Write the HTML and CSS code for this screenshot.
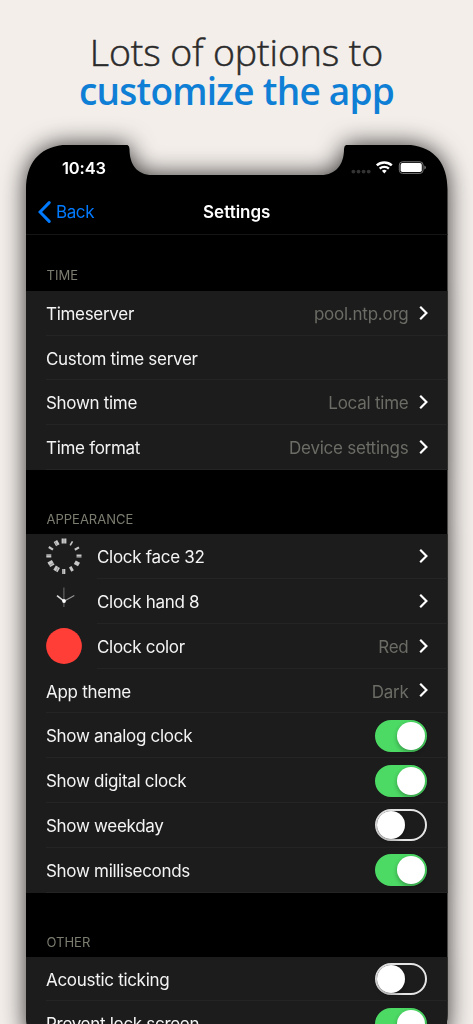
FILE: index.html
```html
<!DOCTYPE html>
<html lang="en">
<head>
    <meta charset="UTF-8">
    <meta name="viewport" content="width=device-width, initial-scale=1.0">
    <title>Settings</title>
    <link rel="stylesheet" href="styles.css">
</head>
<body>
    <svg class="symbols">
        <symbol id="chevron" viewBox="0 0 9 14">
            <path d="M1.2 .8 L7.4 7 L1.2 13.2" fill="none" stroke="#fff" stroke-width="2.2"/>
        </symbol>
    </svg>
    <h1 class="headline">
        <span class="line-light">Lots of options to</span>
        <span class="line-bold">customize the app</span>
    </h1>
    <div class="phone-shadow">
        <div class="phone">
            <div class="status-bar">
                <span class="clock">10:43</span>
                <svg class="status-icons" width="76" height="16" viewBox="0 0 76 16">
                    <g fill="#333">
                        <circle cx="2.4" cy="11.6" r="1.9"/>
                        <circle cx="7.5" cy="11.6" r="1.9"/>
                        <circle cx="12.6" cy="11.6" r="1.9"/>
                        <circle cx="17.7" cy="11.6" r="1.9"/>
                    </g>
                    <g fill="none" stroke="#fff" stroke-width="2.4">
                        <path d="M25.8 5.4 a11 11 0 0 1 15 0"/>
                        <path d="M28.7 8.7 a6.8 6.8 0 0 1 9.2 0"/>
                    </g>
                    <path d="M30.9 10.8 a3.7 3.7 0 0 1 4.8 0 L33.3 13.4 Z" fill="#fff"/>
                    <rect x="48.3" y="1.8" width="23.8" height="11.6" rx="3.2" fill="none" stroke="#777" stroke-width="1"/>
                    <rect x="49.6" y="3.1" width="21.2" height="9" rx="1.8" fill="#fff"/>
                    <path d="M73.3 5.6 q1.6 .5 1.6 2 t-1.6 2 Z" fill="#777"/>
                </svg>
            </div>
            <div class="nav-bar">
                <a class="back">
                    <svg width="13" height="22" viewBox="0 0 13 22"><path d="M11.2 1.6 L2 11 L11.2 20.4" fill="none" stroke="#007aff" stroke-width="3" stroke-linecap="round"/></svg>
                    <span>Back</span>
                </a>
                <span class="title">Settings</span>
            </div>

            <h2 class="section-title">TIME</h2>
            <div class="list">
                <div class="row"><div class="cell"><span class="label">Timeserver</span><span class="value">pool.ntp.org</span><svg class="chevron"><use href="#chevron"/></svg></div></div>
                <div class="row"><div class="cell"><span class="label">Custom time server</span></div></div>
                <div class="row"><div class="cell"><span class="label">Shown time</span><span class="value">Local time</span><svg class="chevron"><use href="#chevron"/></svg></div></div>
                <div class="row"><div class="cell"><span class="label">Time format</span><span class="value">Device settings</span><svg class="chevron"><use href="#chevron"/></svg></div></div>
            </div>

            <h2 class="section-title">APPEARANCE</h2>
            <div class="list">
                <div class="row">
                    <svg class="thumb" viewBox="0 0 36 36">
                        <g stroke="#c8c8c8">
                            <path d="M18 .5 V5.5" stroke-width="4.8"/>
                            <path d="M26.5 3.3 L24.2 7.3" stroke-width="1.6"/>
                            <path d="M33 9.4 L28.8 11.8" stroke-width="2.2"/>
                            <path d="M30.5 18 H35.5" stroke-width="3.2"/>
                            <path d="M28.8 24.2 L33 26.6" stroke-width="4"/>
                            <path d="M24.2 28.8 L26.6 33" stroke-width="2.8"/>
                            <path d="M17.7 31 V36" stroke-width="3.2"/>
                            <path d="M11.9 28.8 L9.4 33" stroke-width="4.8"/>
                            <path d="M7.2 24.2 L2.8 26.8" stroke-width="5.4"/>
                            <path d="M.3 17.8 H5.3" stroke-width="3.2"/>
                            <path d="M2.8 9 L7 11.6" stroke-width="2.2"/>
                            <path d="M9.4 3 L11.8 7.2" stroke-width="4"/>
                        </g>
                        <g stroke="#1c1c1c" stroke-width=".3">
                            <path d="M18 0 V6 M30 18.6 H36 M17.2 30 V37 M0 17.2 H6 M9 3.4 L11.5 8 M8 24.8 L2.5 28 M12.6 28.4 L10 33.4"/>
                        </g>
                    </svg>
                    <div class="cell"><span class="label">Clock face 32</span><svg class="chevron"><use href="#chevron"/></svg></div>
                </div>
                <div class="row">
                    <svg class="thumb" viewBox="0 0 36 36">
                        <path d="M17.9 4.5 V24" stroke="#777" stroke-width=".9"/>
                        <path d="M18 18.2 L28.3 12.5" stroke="#999" stroke-width="1.1"/>
                        <path d="M18 18.2 L11 12.7" stroke="#ddd" stroke-width="1.5"/>
                        <circle cx="18" cy="18" r="1.9" fill="#fff"/>
                    </svg>
                    <div class="cell"><span class="label">Clock hand 8</span><svg class="chevron"><use href="#chevron"/></svg></div>
                </div>
                <div class="row">
                    <svg class="thumb" viewBox="0 0 36 36"><circle cx="18" cy="18" r="17.9" fill="#ff3e38"/></svg>
                    <div class="cell"><span class="label">Clock color</span><span class="value">Red</span><svg class="chevron"><use href="#chevron"/></svg></div>
                </div>
                <div class="row"><div class="cell"><span class="label">App theme</span><span class="value">Dark</span><svg class="chevron"><use href="#chevron"/></svg></div></div>
                <div class="row"><div class="cell"><span class="label">Show analog clock</span><span class="switch on"></span></div></div>
                <div class="row"><div class="cell"><span class="label">Show digital clock</span><span class="switch on"></span></div></div>
                <div class="row"><div class="cell"><span class="label">Show weekday</span><span class="switch"></span></div></div>
                <div class="row"><div class="cell"><span class="label">Show milliseconds</span><span class="switch on"></span></div></div>
            </div>

            <h2 class="section-title">OTHER</h2>
            <div class="list">
                <div class="row"><div class="cell"><span class="label">Acoustic ticking</span><span class="switch"></span></div></div>
                <div class="row"><div class="cell"><span class="label">Prevent lock screen</span><span class="switch on"></span></div></div>
            </div>
        </div>
    </div>
</body>
</html>
```

FILE: styles.css
```css
* {
    box-sizing: border-box;
}
body {
    margin: 0;
    height: 1024px;
    overflow: hidden;
    background: #f3eeea;
    font-family: Inter, "Liberation Sans", sans-serif;
    color: #f4f4f4;
}
.symbols {
    display: none;
}
.headline {
    height: 144.5px;
    margin: 0;
    padding-top: 33px;
    font-family: "Open Sans", "Noto Sans", sans-serif;
    font-size: 37.5px;
    line-height: 38.5px;
    text-align: center;
}
.headline span {
    display: block;
}
.line-light {
    font-weight: 300;
    color: #2b2b2b;
    letter-spacing: -0.1px;
    -webkit-text-stroke: 0.5px #2b2b2b;
}
.line-bold {
    font-weight: 600;
    color: #0f7fd6;
    font-size: 37px;
    letter-spacing: -0.75px;
}
.phone-shadow {
    width: 421.5px;
    margin-left: 26px;
    filter: drop-shadow(0 0 12px rgba(0, 0, 0, 0.8));
}
.phone {
    height: 914px;
    overflow: hidden;
    background: #000;
    /* outline of the screen with the notch cut out */
    clip-path: path("M0 45 C0 16 16 0 45 0 H99 Q103.5 0 103.5 4.5 C103.5 20 111 30.5 126 30.5 H295 C310 30.5 318 20 318 4.5 Q318 0 322.5 0 H376.5 C405.5 0 421.5 16 421.5 45 V869 C421.5 898 405.5 914 376.5 914 H45 C16 914 0 898 0 869 Z");
}
.status-bar {
    display: flex;
    justify-content: space-between;
    align-items: center;
    height: 46px;
    padding: 0 21px 0 36px;
}
.clock {
    font-size: 16.5px;
    font-weight: 600;
    letter-spacing: -0.15px;
    color: #fff;
}
.nav-bar {
    display: grid;
    grid-template-columns: 1fr auto 1fr;
    align-items: center;
    height: 44.5px;
    padding: 0 12px;
    border-bottom: 1px solid #151515;
    font-size: 17px;
}
.back {
    display: flex;
    align-items: center;
    gap: 5px;
    color: #007aff;
    letter-spacing: -0.4px;
}
.title {
    font-weight: 600;
    color: #fff;
}
.section-title {
    display: flex;
    align-items: flex-end;
    height: 63.7px;
    margin: 0;
    padding: 0 20.5px 7px;
    font-size: 13px;
    font-weight: 400;
    line-height: 16px;
    color: #7c7c70;
}
.nav-bar + .section-title {
    height: 55.7px;
    padding-bottom: 8px;
}
.list {
    background: #1c1c1c;
    font-size: 17px;
}
.row {
    display: flex;
    align-items: center;
    height: 44.88px;
    padding-left: 20px;
}
.cell {
    display: flex;
    align-items: center;
    flex: 1;
    height: 100%;
    padding-right: 20px;
    border-bottom: 1px solid #242424;
}
.label,
.value {
    padding-top: 2.2px;
    letter-spacing: -0.3px;
}
.label {
    flex: 1;
}
.value {
    margin-right: 10px;
    color: #6c6c66;
    letter-spacing: -0.24px;
}
.chevron {
    width: 9px;
    height: 14px;
}
.thumb {
    flex: none;
    width: 36px;
    height: 36px;
    margin-right: 15px;
}
.switch {
    display: flex;
    align-items: center;
    width: 52px;
    height: 32px;
    margin-top: 0.8px;
    margin-right: 0.6px;
    border: 2px solid #e5e5e5;
    border-radius: 16px;
}
.switch::before {
    content: "";
    width: 28px;
    height: 28px;
    border-radius: 50%;
    background: #fff;
    box-shadow: 0 2px 4px rgba(0, 0, 0, 0.3);
}
.switch.on {
    justify-content: flex-end;
    border-color: #4cd964;
    background: #4cd964;
}
```
